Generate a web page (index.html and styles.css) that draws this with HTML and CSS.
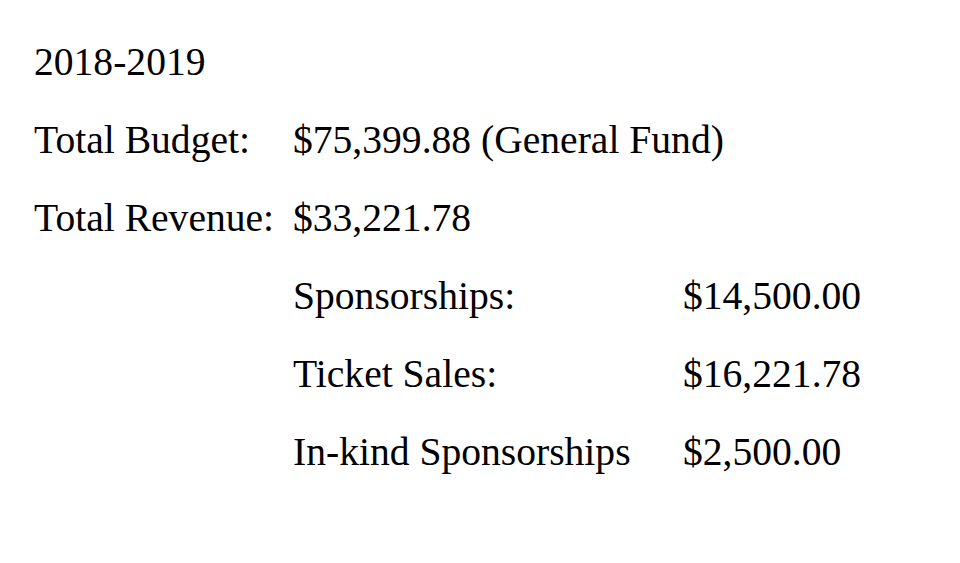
FILE: index.html
```html
<!DOCTYPE html>
<html>
<head>
<meta charset="utf-8">
<link rel="stylesheet" href="styles.css">
</head>
<body>
<div class="doc">
  <div class="row year">2018-2019</div>
  <div class="row pair"><span class="label">Total Budget:</span><span>$75,399.88 (General Fund)</span></div>
  <div class="row pair"><span class="label">Total Revenue:</span><span>$33,221.78</span></div>
  <div class="row sub"><span class="sublabel">Sponsorships:</span><span>$14,500.00</span></div>
  <div class="row sub"><span class="sublabel">Ticket Sales:</span><span>$16,221.78</span></div>
  <div class="row sub"><span class="sublabel">In-kind Sponsorships</span><span>$2,500.00</span></div>
</div>
</body>
</html>
```
FILE: styles.css
```css
html, body {
  margin: 0;
  padding: 0;
  background: #fff;
}
.doc {
  font-family: "Liberation Serif", "Times New Roman", serif;
  font-size: 39.6px;
  color: #000;
  padding: 40px 0 0 34px;
  display: flex;
  flex-direction: column;
  gap: 33px;
}
.row {
  line-height: 45px;
  height: 45px;
  white-space: nowrap;
}
.pair {
  display: flex;
}
.label {
  width: 259px;
}
.sub {
  display: flex;
  padding-left: 259px;
}
.sublabel {
  width: 390px;
}
```
